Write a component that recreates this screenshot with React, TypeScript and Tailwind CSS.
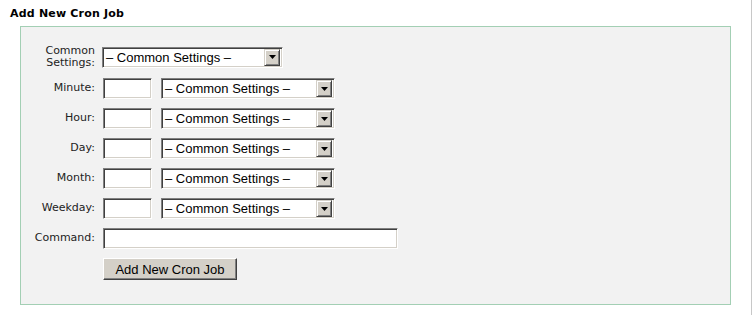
const fields = ["Minute", "Hour", "Day", "Month", "Weekday"];

const sunken =
  "border border-t-[#808080] border-l-[#808080] border-b-white border-r-white shadow-[inset_1px_1px_0_#404040,inset_-1px_-1px_0_#d4d0c8] bg-white";

function FakeSelect({ width }: { width: string }) {
  return (
    <div className={`${sunken} ${width} h-[21px] flex items-center justify-between pl-[3px] pr-[2px]`}>
      <span className="text-[13px] leading-none text-black font-['Liberation_Sans',Arial,sans-serif] whitespace-nowrap">
        – Common Settings –
      </span>
      <div className="w-[16px] h-[17px] bg-[#d4d0c8] border border-t-[#d4d0c8] border-l-[#d4d0c8] border-b-[#404040] border-r-[#404040] shadow-[inset_1px_1px_0_#fff,inset_-1px_-1px_0_#808080] flex items-center justify-center">
        <svg width="7" height="4" viewBox="0 0 7 4">
          <path d="M0 0h7L3.5 4z" fill="#000" />
        </svg>
      </div>
    </div>
  );
}

export default function App() {
  return (
    <div className="w-[752px] h-[315px] bg-white border-r border-[#c8c8c8] font-['DejaVu_Sans',Verdana,sans-serif]">
      <h2 className="pl-[10px] pt-[7px] text-[11px] leading-[13px] font-bold tracking-[0.2px] text-black">
        Add New Cron Job
      </h2>

      <div className="ml-[20px] mt-[6px] w-[711px] h-[279px] bg-[#f2f2f2] border border-[#a3cfb4] pt-[18px] flex flex-col gap-[9px]">
        <div className="flex items-center h-[24px]">
          <label className="w-[74px] text-right text-[11px] leading-[12px] text-[#222]">
            Common
            <br />
            Settings:
          </label>
          <div className="ml-[7px]">
            <FakeSelect width="w-[181px]" />
          </div>
        </div>

        {fields.map((f) => (
          <div key={f} className="flex items-center h-[21px]">
            <label className="w-[74px] text-right text-[11px] text-[#222]">{f}:</label>
            <div className={`${sunken} ml-[8px] w-[49px] h-[21px]`} />
            <div className="ml-[9px]">
              <FakeSelect width="w-[174px]" />
            </div>
          </div>
        ))}

        <div className="flex items-center h-[21px]">
          <label className="w-[74px] text-right text-[11px] text-[#222]">Command:</label>
          <div className={`${sunken} ml-[8px] w-[295px] h-[21px]`} />
        </div>

        <div className="flex h-[22px]">
          <button className="ml-[82px] w-[134px] h-[22px] bg-[#d4d0c8] border border-t-white border-l-white border-b-[#404040] border-r-[#404040] shadow-[inset_-1px_-1px_0_#808080] text-[13px] leading-none text-black font-['Liberation_Sans',Arial,sans-serif]">
            Add New Cron Job
          </button>
        </div>
      </div>
    </div>
  );
}
